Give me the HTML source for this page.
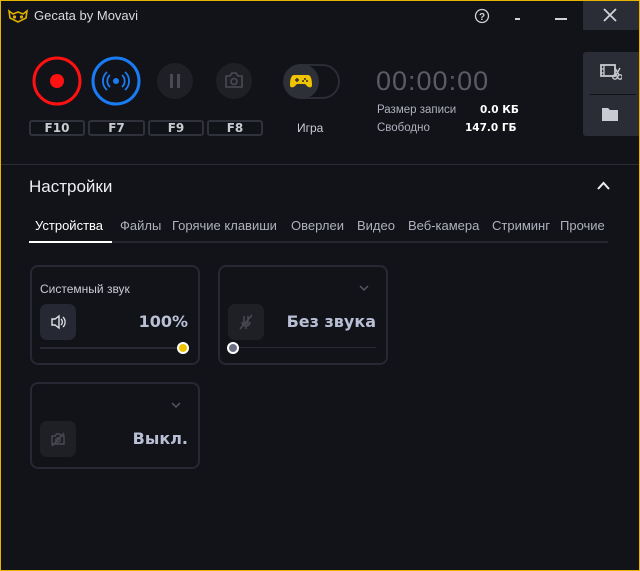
<!DOCTYPE html>
<html><head><meta charset="utf-8"><style>
*{margin:0;padding:0;box-sizing:border-box}
body{width:640px;height:571px;background:#121318;font-family:"Liberation Sans","DejaVu Sans",sans-serif;overflow:hidden;position:relative;color:#c9cbd3}
.frame{position:absolute;left:0;top:0;width:640px;height:571px;border:1px solid #e8b400;pointer-events:none;z-index:10}
.a{position:absolute}
.fk{position:absolute;top:120px;height:16px;border:2px solid #2f313b;border-radius:3px;font-weight:bold;font-size:12px;color:#c9cbd3;text-align:center;line-height:12px;font-family:"DejaVu Sans",sans-serif}
.tab{position:absolute;top:218px;font-size:13px;color:#aeb1bd}
.card{position:absolute;border:2px solid #262833;border-radius:8px}
.ib{position:absolute;width:36px;height:36px;border-radius:7px}
.big{position:absolute;font-family:"DejaVu Sans",sans-serif;font-weight:bold;font-size:16px;color:#b9c0d6;text-align:right;width:150px}
</style></head><body>
<div class="frame"></div>
<svg class="a" style="left:8px;top:9px" width="20" height="14" viewBox="0 0 20 14"><path d="M1 2 L5 5 L10 3 L15 5 L19 2 L18 9 L10 13 L2 9 Z" fill="none" stroke="#e0b000" stroke-width="1.6"/><circle cx="6.5" cy="8" r="1.6" fill="#e0b000"/><circle cx="13.5" cy="8" r="1.6" fill="#e0b000"/></svg>
<div class="a" style="left:34px;top:8px;font-size:13px;color:#d8dae0">Gecata by Movavi</div>
<svg class="a" style="left:474px;top:8px" width="16" height="16"><circle cx="8" cy="8" r="6.5" fill="none" stroke="#d0d2d8" stroke-width="1.3"/><text x="8" y="12" font-size="10" text-anchor="middle" fill="#d0d2d8" font-family="Liberation Sans" font-weight="bold">?</text></svg>
<div class="a" style="left:515px;top:18px;width:5px;height:2px;background:#d0d2d8"></div>
<div class="a" style="left:555px;top:18px;width:12px;height:2px;background:#d0d2d8"></div>
<div class="a" style="left:583px;top:0;width:56px;height:30px;background:#2a2c36"></div>
<svg class="a" style="left:603px;top:8px" width="14" height="14"><path d="M1 1L13 13M13 1L1 13" stroke="#d0d2d8" stroke-width="1.8"/></svg>
<div class="a" style="left:583px;top:52px;width:56px;height:84px;background:#2a2c36;border-radius:3px 0 0 3px"></div>
<div class="a" style="left:590px;top:94px;width:46px;height:1px;background:#121318"></div>
<svg class="a" style="left:600px;top:63px" width="22" height="18" viewBox="0 0 22 18"><rect x="1" y="2" width="14" height="11" fill="none" stroke="#c9cbd3" stroke-width="1.8"/><path d="M4 2v11M1 6h3M1 10h3" stroke="#c9cbd3" stroke-width="1.3"/><circle cx="15" cy="14" r="2.2" fill="none" stroke="#c9cbd3" stroke-width="1.4"/><circle cx="20" cy="14" r="2.2" fill="none" stroke="#c9cbd3" stroke-width="1.4"/><path d="M16 12L20 5M19 12L15 5" stroke="#c9cbd3" stroke-width="1.4"/></svg>
<svg class="a" style="left:602px;top:107px" width="16" height="14"><path d="M0 1h6l2 2h8v11H0z" fill="#c9cbd3"/></svg>
<svg class="a" style="left:30px;top:54px" width="240" height="56">
<circle cx="27" cy="27" r="23" fill="none" stroke="#ff1111" stroke-width="3"/><circle cx="27" cy="27" r="7" fill="#ff1111"/>
<circle cx="86" cy="27" r="23" fill="none" stroke="#1a7cf5" stroke-width="3"/><circle cx="86" cy="27" r="3" fill="#1a7cf5"/>
<path d="M80 21a8 8 0 0 0 0 12M92 21a8 8 0 0 1 0 12M77 18a12 12 0 0 0 0 18M95 18a12 12 0 0 1 0 18" fill="none" stroke="#1a7cf5" stroke-width="1.8"/>
<circle cx="145" cy="27" r="18" fill="#1f2025"/><rect x="140" y="20" width="3" height="14" fill="#4a4b52"/><rect x="147" y="20" width="3" height="14" fill="#4a4b52"/>
<circle cx="204" cy="27" r="18" fill="#1f2025"/><path d="M196 22h4l2-3h4l2 3h4v11h-16z" fill="none" stroke="#4a4b52" stroke-width="1.6"/><circle cx="204" cy="27.5" r="3" fill="none" stroke="#4a4b52" stroke-width="1.6"/>
</svg>
<div class="a" style="left:283px;top:64px;width:57px;height:35px;border:2px solid #2a2c36;border-radius:18px"></div>
<div class="a" style="left:284px;top:64px;width:35px;height:35px;background:#2e3038;border-radius:50%"></div>
<svg class="a" style="left:290px;top:73px" width="22" height="16" viewBox="0 0 22 16"><path d="M4 2h14c3 0 4 5 4 10 0 3-3 3-5 1l-2-2H7l-2 2c-2 2-5 2-5-1C0 7 1 2 4 2z" fill="#f2c300"/><path d="M5 7h4M7 5v4" stroke="#2e3038" stroke-width="1.5"/><circle cx="15" cy="6" r="1" fill="#2e3038"/><circle cx="17" cy="8" r="1" fill="#2e3038"/><circle cx="13" cy="8" r="1" fill="#2e3038"/></svg>
<div class="fk" style="left:29px;width:56px">F10</div>
<div class="fk" style="left:88px;width:57px">F7</div>
<div class="fk" style="left:148px;width:56px">F9</div>
<div class="fk" style="left:207px;width:56px">F8</div>
<div class="a" style="left:297px;top:121px;font-size:12px;color:#c9cbd3">Игра</div>
<div class="a" style="left:376px;top:66px;font-size:27px;color:#5a5c64;letter-spacing:1px">00:00:00</div>
<div class="a" style="left:377px;top:104px;font-size:11.5px;color:#aeb1bd">Размер записи</div>
<div class="a" style="left:480px;top:104px;font-size:10.5px;color:#fff;font-weight:bold;font-family:'DejaVu Sans',sans-serif">0.0 КБ</div>
<div class="a" style="left:377px;top:122px;font-size:11.5px;color:#aeb1bd">Свободно</div>
<div class="a" style="left:465px;top:122px;font-size:10.5px;color:#fff;font-weight:bold;font-family:'DejaVu Sans',sans-serif">147.0 ГБ</div>
<div class="a" style="left:1px;top:164px;width:638px;height:1px;background:#2a2c36"></div>
<div class="a" style="left:29px;top:177px;font-size:17px;color:#eceef2">Настройки</div>
<svg class="a" style="left:597px;top:181px" width="13" height="9"><path d="M1 8L6.5 2L12 8" fill="none" stroke="#eceef2" stroke-width="2"/></svg>
<div class="tab" style="left:35px;color:#fff">Устройства</div>
<div class="tab" style="left:120px">Файлы</div>
<div class="tab" style="left:172px">Горячие клавиши</div>
<div class="tab" style="left:291px">Оверлеи</div>
<div class="tab" style="left:357px">Видео</div>
<div class="tab" style="left:408px">Веб-камера</div>
<div class="tab" style="left:492px">Стриминг</div>
<div class="tab" style="left:560px">Прочие</div>
<div class="a" style="left:29px;top:241px;width:579px;height:2px;background:#25262f"></div>
<div class="a" style="left:29px;top:241px;width:83px;height:2px;background:#fff"></div>
<div class="card" style="left:30px;top:265px;width:170px;height:100px"></div>
<div class="a" style="left:40px;top:282px;font-size:12px;color:#c9cbd3">Системный звук</div>
<div class="ib" style="left:40px;top:304px;background:#262834"></div>
<svg class="a" style="left:50px;top:314px" width="16" height="16"><path d="M2 5h3l4-3v12l-4-3H2z" fill="none" stroke="#e0e2e8" stroke-width="1.4"/><path d="M11 5a4 4 0 0 1 0 6M13 3a7 7 0 0 1 0 10" fill="none" stroke="#e0e2e8" stroke-width="1.3"/></svg>
<div class="big" style="left:38px;top:312px">100%</div>
<div class="a" style="left:40px;top:347px;width:144px;height:2px;background:#262833"></div>
<div class="a" style="left:177px;top:342px;width:12px;height:12px;border-radius:50%;background:#f2c300;border:2px solid #fff"></div>
<div class="card" style="left:218px;top:265px;width:170px;height:100px"></div>
<svg class="a" style="left:359px;top:285px" width="10" height="7"><path d="M1 1l4 4 4-4" fill="none" stroke="#555760" stroke-width="1.5"/></svg>
<div class="ib" style="left:228px;top:304px;background:#1f2025"></div>
<svg class="a" style="left:237px;top:313px" width="18" height="18"><path d="M7 3v6a2 2 0 0 0 4 0V3M5 9a4 4 0 0 0 8 0M9 13v3M3 16L15 2" fill="none" stroke="#4a4b52" stroke-width="1.5"/></svg>
<div class="big" style="left:226px;top:312px">Без звука</div>
<div class="a" style="left:228px;top:347px;width:148px;height:1px;background:#262833"></div>
<div class="a" style="left:227px;top:342px;width:12px;height:12px;border-radius:50%;background:#6b7084;border:2px solid #fff"></div>
<div class="card" style="left:30px;top:382px;width:170px;height:87px"></div>
<svg class="a" style="left:171px;top:402px" width="10" height="7"><path d="M1 1l4 4 4-4" fill="none" stroke="#555760" stroke-width="1.5"/></svg>
<div class="ib" style="left:40px;top:421px;background:#1f2025"></div>
<svg class="a" style="left:49px;top:430px" width="18" height="18"><path d="M3 6h3l1.5-2h3L12 6h3v8H3z" fill="none" stroke="#4a4b52" stroke-width="1.4"/><circle cx="9" cy="10" r="2.2" fill="none" stroke="#4a4b52" stroke-width="1.4"/><path d="M3 16L15 3" stroke="#4a4b52" stroke-width="1.5"/></svg>
<div class="big" style="left:38px;top:429px">Выкл.</div>
</body></html>
